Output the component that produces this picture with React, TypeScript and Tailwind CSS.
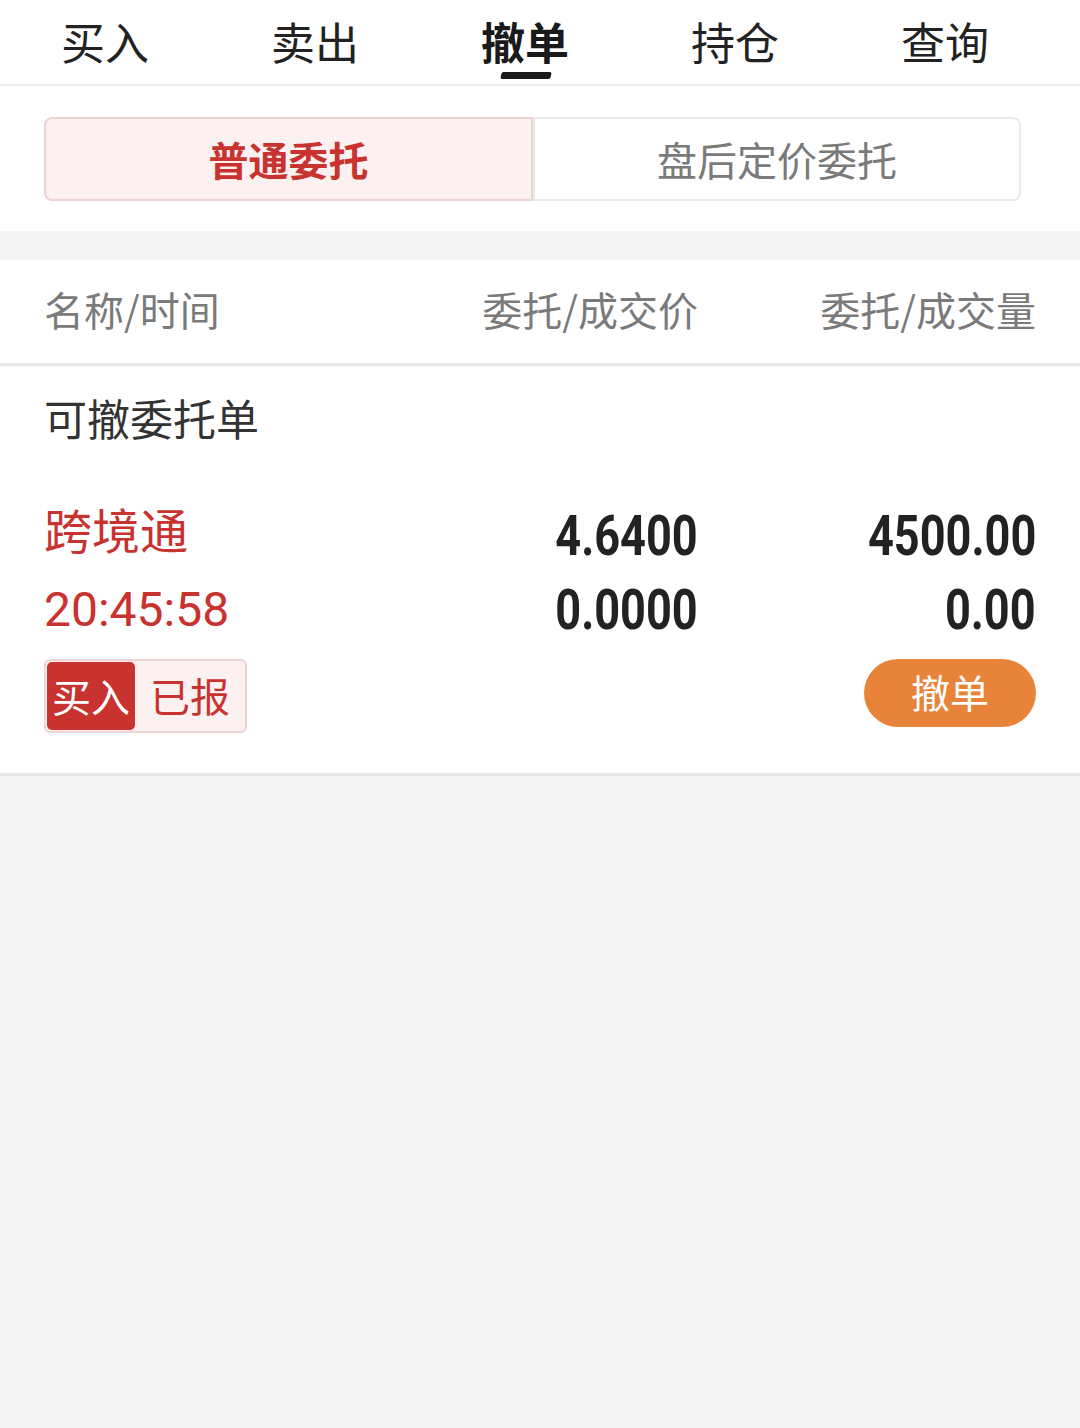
const cjk = "font-['Noto_Sans_CJK_SC','Noto_Sans',sans-serif]";
const num = "font-['Roboto','Liberation_Sans',sans-serif]";

const tabs = ["买入", "卖出", "撤单", "持仓", "查询"];

function BoldNum({ children }: { children: string }) {
  return (
    <span className={`${num} inline-block origin-right scale-x-[0.82] text-[55px] font-bold leading-none text-[#222]`}>
      {children}
    </span>
  );
}

export default function App() {
  return (
    <div className={`min-h-screen w-[1080px] bg-[#f4f4f4] ${cjk}`}>
      {/* 顶部标签 */}
      <div className="flex h-[86px] border-b-2 border-[#ededed] bg-white">
        {tabs.map((t) => {
          const active = t === "撤单";
          return (
            <div key={t} className="relative flex w-[210px] items-center justify-center pb-[2px]">
              <span className={`text-[44px] leading-none ${active ? "font-bold text-[#1a1a1a]" : "text-[#222]"}`}>{t}</span>
              {active && (
                <div className="absolute left-[81px] top-[72px] h-[7px] w-[50px] -skew-x-12 rounded-[2px] bg-[#1a1a1a]" />
              )}
            </div>
          );
        })}
      </div>

      {/* 委托类型切换 */}
      <div className="bg-white px-[44px] pb-[30px] pt-[31px]">
        <div className="flex h-[84px] w-[977px]">
          <div className="flex w-[489px] items-center justify-center rounded-l-lg border-2 border-[#eed3d3] bg-[#fbf1f1]">
            <span className="text-[40px] font-bold leading-none text-[#c8322f]">普通委托</span>
          </div>
          <div className="flex flex-1 items-center justify-center rounded-r-lg border-2 border-[#e9e9e9] bg-white">
            <span className="text-[40px] leading-none text-[#7a7a7a]">盘后定价委托</span>
          </div>
        </div>
      </div>

      <div className="h-[29px]" />

      {/* 表头 */}
      <div className="grid h-[106px] grid-cols-[1fr_254px_338px] items-center border-b-[3px] border-[#e6e6e6] bg-white px-[44px] pb-[5px] text-[40px] leading-none text-[#7a7a7a]">
        <span>名称/时间</span>
        <span className="text-right">委托/成交价</span>
        <span className="text-right">委托/成交量</span>
      </div>

      {/* 可撤委托单 */}
      <div className="border-b-[3px] border-[#e6e6e6] bg-white px-[44px] pb-[40px]">
        <div className="flex h-[108px] items-center pb-[5px]">
          <span className="text-[43px] leading-none text-[#333]">可撤委托单</span>
        </div>

        <div className="pt-[16px]">
          <div className="grid h-[80px] grid-cols-[1fr_254px_338px] items-center">
            <span className="pb-[4px] text-[48px] leading-none text-[#c8322f]">跨境通</span>
            <span className="pt-[12px] text-right"><BoldNum>4.6400</BoldNum></span>
            <span className="pt-[12px] text-right"><BoldNum>4500.00</BoldNum></span>
          </div>
          <div className="grid h-[80px] grid-cols-[1fr_254px_338px] items-center">
            <span className={`${num} text-[48px] leading-none text-[#c8322f]`}>20:45:58</span>
            <span className="text-right"><BoldNum>0.0000</BoldNum></span>
            <span className="text-right"><BoldNum>0.00</BoldNum></span>
          </div>
          <div className="mt-[9px] flex h-[74px] items-start justify-between">
            <div className="flex h-[74px] w-[203px] items-center rounded-md border-2 border-[#f0d4d4] bg-[#fcf1f1] p-[1px]">
              <div className="flex h-[68px] w-[88px] items-center justify-center rounded-[5px] bg-[#c8322f]">
                <span className="pb-[2px] text-[39px] leading-none text-white">买入</span>
              </div>
              <span className="ml-[15px] pb-[2px] text-[40px] leading-none text-[#c8322f]">已报</span>
            </div>
            <button className="flex h-[68px] w-[172px] items-center justify-center rounded-full bg-[#e8843a]">
              <span className="pb-[4px] text-[39px] leading-none text-white">撤单</span>
            </button>
          </div>
        </div>
      </div>
    </div>
  );
}
